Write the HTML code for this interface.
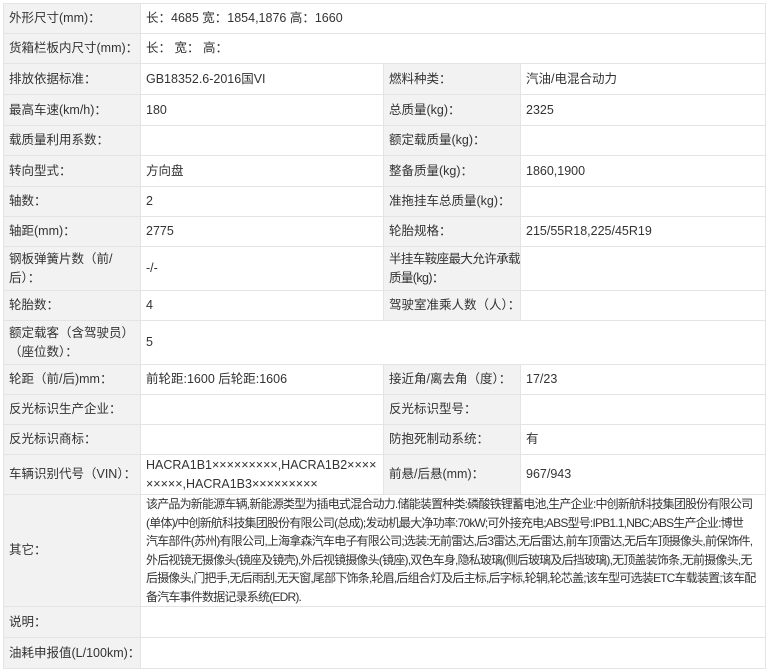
<!DOCTYPE html>
<html><head><meta charset="utf-8">
<style>
html,body{margin:0;padding:0;background:#fff;width:768px;height:670px;overflow:hidden}
body{font-family:"Liberation Sans","Noto Sans CJK SC",sans-serif;font-size:12.5px;color:#333}
table{position:absolute;left:3px;top:3px;border-collapse:collapse;table-layout:fixed;width:762px}
td{border:1px solid #e4e4e4;padding:0 2px 0 5px;vertical-align:middle;line-height:19px;white-space:nowrap;overflow:hidden}
td.l{background:#f2f2f2}
td.o{font-size:12px;letter-spacing:-0.8px;line-height:18.5px}
</style></head><body>
<table>
<colgroup><col style="width:137px"><col style="width:243px"><col style="width:137px"><col style="width:245px"></colgroup>
<tr style="height:30px"><td class="l">外形尺寸(mm)：</td><td colspan="3">长：4685 宽：1854,1876 高：1660</td></tr>
<tr style="height:30px"><td class="l">货箱栏板内尺寸(mm)：</td><td colspan="3">长： 宽： 高：</td></tr>
<tr style="height:31px"><td class="l">排放依据标准：</td><td>GB18352.6-2016国VI</td><td class="l">燃料种类：</td><td>汽油/电混合动力</td></tr>
<tr style="height:31px"><td class="l">最高车速(km/h)：</td><td>180</td><td class="l">总质量(kg)：</td><td>2325</td></tr>
<tr style="height:30px"><td class="l">载质量利用系数：</td><td></td><td class="l">额定载质量(kg)：</td><td></td></tr>
<tr style="height:31px"><td class="l">转向型式：</td><td>方向盘</td><td class="l">整备质量(kg)：</td><td>1860,1900</td></tr>
<tr style="height:30px"><td class="l">轴数：</td><td>2</td><td class="l">准拖挂车总质量(kg)：</td><td></td></tr>
<tr style="height:30px"><td class="l">轴距(mm)：</td><td>2775</td><td class="l">轮胎规格：</td><td>215/55R18,225/45R19</td></tr>
<tr style="height:44px"><td class="l">钢板弹簧片数（前/<br>后）：</td><td>-/-</td><td class="l" style="letter-spacing:-0.6px">半挂车鞍座最大允许承载<br>质量(kg)：</td><td></td></tr>
<tr style="height:30px"><td class="l">轮胎数：</td><td>4</td><td class="l">驾驶室准乘人数（人）：</td><td></td></tr>
<tr style="height:44px"><td class="l">额定载客（含驾驶员）<br>（座位数）：</td><td colspan="3">5</td></tr>
<tr style="height:30px"><td class="l">轮距（前/后)mm：</td><td>前轮距:1600 后轮距:1606</td><td class="l">接近角/离去角（度）：</td><td>17/23</td></tr>
<tr style="height:30px"><td class="l">反光标识生产企业：</td><td></td><td class="l">反光标识型号：</td><td></td></tr>
<tr style="height:30px"><td class="l">反光标识商标：</td><td></td><td class="l">防抱死制动系统：</td><td>有</td></tr>
<tr style="height:40px"><td class="l">车辆识别代号（VIN）：</td><td>HACRA1B1×××××××××,HACRA1B2××××<br>×××××,HACRA1B3×××××××××</td><td class="l">前悬/后悬(mm)：</td><td>967/943</td></tr>
<tr style="height:108px"><td class="l">其它：</td><td colspan="3" class="o">该产品为新能源车辆,新能源类型为插电式混合动力.储能装置种类:磷酸铁锂蓄电池,生产企业:中创新航科技集团股份有限公司<br>(单体)/中创新航科技集团股份有限公司(总成);发动机最大净功率:70kW;可外接充电;ABS型号:IPB1.1,NBC;ABS生产企业:博世<br>汽车部件(苏州)有限公司,上海拿森汽车电子有限公司;选装:无前雷达,后3雷达,无后雷达,前车顶雷达,无后车顶摄像头,前保饰件,<br>外后视镜无摄像头(镜座及镜壳),外后视镜摄像头(镜座),双色车身,隐私玻璃(侧后玻璃及后挡玻璃),无顶盖装饰条,无前摄像头,无<br>后摄像头,门把手,无后雨刮,无天窗,尾部下饰条,轮眉,后组合灯及后主标,后字标,轮辋,轮芯盖;该车型可选装ETC车载装置;该车配<br>备汽车事件数据记录系统(EDR).</td></tr>
<tr style="height:31px"><td class="l">说明：</td><td colspan="3"></td></tr>
<tr style="height:31px"><td class="l">油耗申报值(L/100km)：</td><td colspan="3"></td></tr>
</table>
</body></html>
